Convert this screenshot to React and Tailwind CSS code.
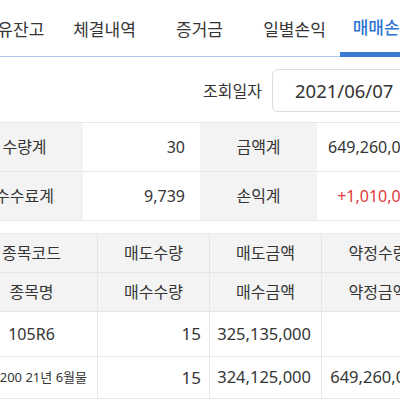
const tabs = [
  { label: '보유잔고', w: 'w-[92px]' },
  { label: '체결내역', w: 'w-[91px]' },
  { label: '증거금', w: 'w-[99px]' },
  { label: '일별손익', w: 'w-[91px]' },
  { label: '매매손익', w: 'w-[88px]', active: true },
];

export default function App() {
  return (
    <div
      className="w-[400px] h-[400px] overflow-hidden bg-white text-[#353535]"
      style={{ fontFamily: '"Noto Sans", "Noto Sans CJK KR", sans-serif' }}
    >
      {/* 탭 */}
      <div className="flex h-[57px] border-b border-[#a9c9ee] -ml-[33px] w-[470px]">
        {tabs.map((t) => (
          <div
            key={t.label}
            className={`${t.w} shrink-0 flex items-center justify-center pt-[3px] text-[17px] ${
              t.active ? 'text-[#2f74d0] font-medium border-b-[5px] border-[#3b7bd5] -mb-px h-[57px]' : 'h-[56px]'
            }`}
          >
            {t.label}
          </div>
        ))}
      </div>

      {/* 조회일자 */}
      <div className="flex items-center justify-end h-[65px] pt-[2px]">
        <span className="text-[16px] mr-[10px]">조회일자</span>
        <div className="w-[140px] -mr-[12px] h-[43px] border border-[#dcdcdc] rounded-md flex items-center pl-[22px] text-[18.5px] text-[#333]">
          2021/06/07
        </div>
      </div>

      <div className="-ml-[34px] w-[468px]">
        {/* 합계 */}
        <div className="grid grid-cols-4 border-t border-[#e8e8e8] text-[16px]">
          <div className="h-[49px] bg-[#f3f3f3] flex items-center justify-center border-b border-[#e8e8e8]">수량계</div>
          <div className="h-[49px] flex items-center justify-end pr-[15px] border-b border-[#e8e8e8]">30</div>
          <div className="h-[49px] bg-[#f3f3f3] flex items-center justify-center border-b border-[#e8e8e8]">금액계</div>
          <div className="h-[49px] flex items-center justify-end pr-[15px] border-b border-[#e8e8e8]">649,260,000</div>
          <div className="h-[49px] bg-[#f3f3f3] flex items-center justify-center border-b border-[#e8e8e8]">수수료계</div>
          <div className="h-[49px] flex items-center justify-end pr-[15px] border-b border-[#e8e8e8]">9,739</div>
          <div className="h-[49px] bg-[#f3f3f3] flex items-center justify-center border-b border-[#e8e8e8]">손익계</div>
          <div className="h-[49px] flex items-center justify-end pr-[15px] border-b border-[#e8e8e8] text-[#e03a3e]">+1,010,000</div>
        </div>

        {/* 상세 */}
        <div className="mt-[12px] border-t border-[#e8e8e8] grid grid-cols-[132px_112px_112px_112px] text-[16px]">
          <div className="h-[39px] bg-[#f3f3f3] flex items-center justify-center border-b border-r border-[#e4e4e4]">종목코드</div>
          <div className="h-[39px] bg-[#f3f3f3] flex items-center justify-center border-b border-r border-[#e4e4e4]">매도수량</div>
          <div className="h-[39px] bg-[#f3f3f3] flex items-center justify-center border-b border-r border-[#e4e4e4]">매도금액</div>
          <div className="h-[39px] bg-[#f3f3f3] flex items-center justify-center border-b border-[#e4e4e4]">약정수량</div>

          <div className="h-[39px] bg-[#f3f3f3] flex items-center justify-center border-b border-r border-[#e4e4e4]">종목명</div>
          <div className="h-[39px] bg-[#f3f3f3] flex items-center justify-center border-b border-r border-[#e4e4e4]">매수수량</div>
          <div className="h-[39px] bg-[#f3f3f3] flex items-center justify-center border-b border-r border-[#e4e4e4]">매수금액</div>
          <div className="h-[39px] bg-[#f3f3f3] flex items-center justify-center border-b border-[#e4e4e4]">약정금액</div>

          <div className="h-[45px] flex items-center justify-center border-b border-r border-[#e8e8e8]">105R6</div>
          <div className="h-[45px] flex items-center justify-end pr-[8px] border-b border-r border-[#e8e8e8] text-[17px]">15</div>
          <div className="h-[45px] flex items-center justify-end pr-[10px] border-b border-r border-[#e8e8e8] text-[16.5px]">325,135,000</div>
          <div className="h-[45px] border-b border-[#e8e8e8]"></div>

          <div className="h-[42px] flex items-center justify-end pr-[10px] border-b border-r border-[#e8e8e8] text-[13px] whitespace-nowrap overflow-visible">KOSPI200 21년 6월물</div>
          <div className="h-[42px] flex items-center justify-end pr-[8px] border-b border-r border-[#e8e8e8] text-[17px]">15</div>
          <div className="h-[42px] flex items-center justify-end pr-[10px] border-b border-r border-[#e8e8e8] text-[16.5px]">324,125,000</div>
          <div className="h-[42px] flex items-center justify-end pr-[10px] border-b border-[#e8e8e8] text-[16.5px]">649,260,000</div>
        </div>
      </div>
    </div>
  );
}
